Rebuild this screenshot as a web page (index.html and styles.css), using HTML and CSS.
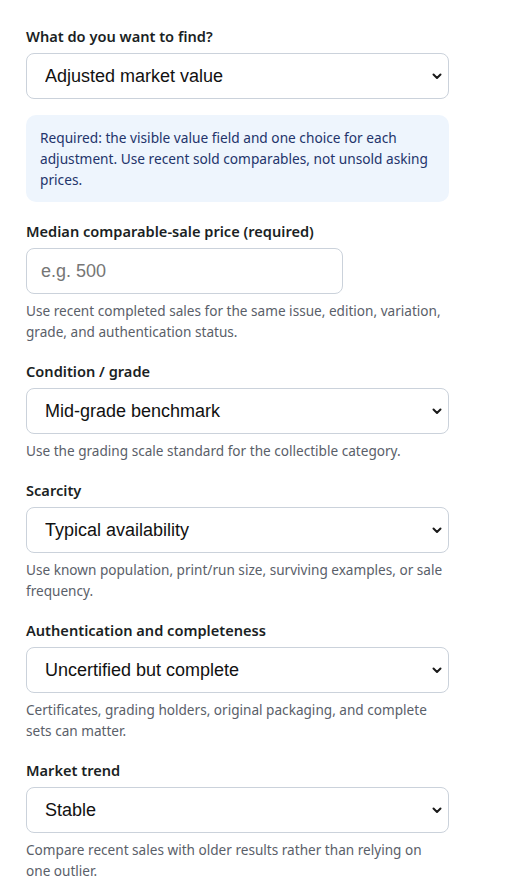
FILE: index.html
```html
<!DOCTYPE html>
<html lang="en">
<head>
<meta charset="utf-8">
<title>Adjusted market value</title>
<link rel="stylesheet" href="styles.css">
</head>
<body>
<form class="form">
  <div class="field">
    <label class="label" for="goal">What do you want to find?</label>
    <div class="select-wrap">
      <select id="goal" class="control">
        <option>Adjusted market value</option>
      </select>
      <svg class="chev" width="10" height="7" viewBox="0 0 10 7"><path d="M1.5 1.5 L5 5 L8.5 1.5" fill="none" stroke="#1a1a1a" stroke-width="2" stroke-linecap="round" stroke-linejoin="round"/></svg>
    </div>
    <div class="info">Required: the visible value field and one choice for each adjustment. Use recent sold comparables, not unsold asking prices.</div>
  </div>
  <div class="field">
    <label class="label" for="price">Median comparable-sale price (required)</label>
    <input id="price" class="control input" type="text" placeholder="e.g. 500">
    <p class="help">Use recent completed sales for the same issue, edition, variation, grade, and authentication status.</p>
  </div>
  <div class="field">
    <label class="label" for="grade">Condition / grade</label>
    <div class="select-wrap">
      <select id="grade" class="control">
        <option>Mid-grade benchmark</option>
      </select>
      <svg class="chev" width="10" height="7" viewBox="0 0 10 7"><path d="M1.5 1.5 L5 5 L8.5 1.5" fill="none" stroke="#1a1a1a" stroke-width="2" stroke-linecap="round" stroke-linejoin="round"/></svg>
    </div>
    <p class="help">Use the grading scale standard for the collectible category.</p>
  </div>
  <div class="field">
    <label class="label" for="scarcity">Scarcity</label>
    <div class="select-wrap">
      <select id="scarcity" class="control">
        <option>Typical availability</option>
      </select>
      <svg class="chev" width="10" height="7" viewBox="0 0 10 7"><path d="M1.5 1.5 L5 5 L8.5 1.5" fill="none" stroke="#1a1a1a" stroke-width="2" stroke-linecap="round" stroke-linejoin="round"/></svg>
    </div>
    <p class="help">Use known population, print/run size, surviving examples, or sale frequency.</p>
  </div>
  <div class="field">
    <label class="label" for="auth">Authentication and completeness</label>
    <div class="select-wrap">
      <select id="auth" class="control">
        <option>Uncertified but complete</option>
      </select>
      <svg class="chev" width="10" height="7" viewBox="0 0 10 7"><path d="M1.5 1.5 L5 5 L8.5 1.5" fill="none" stroke="#1a1a1a" stroke-width="2" stroke-linecap="round" stroke-linejoin="round"/></svg>
    </div>
    <p class="help">Certificates, grading holders, original packaging, and complete sets can matter.</p>
  </div>
  <div class="field">
    <label class="label" for="trend">Market trend</label>
    <div class="select-wrap">
      <select id="trend" class="control">
        <option>Stable</option>
      </select>
      <svg class="chev" width="10" height="7" viewBox="0 0 10 7"><path d="M1.5 1.5 L5 5 L8.5 1.5" fill="none" stroke="#1a1a1a" stroke-width="2" stroke-linecap="round" stroke-linejoin="round"/></svg>
    </div>
    <p class="help">Compare recent sales with older results rather than relying on one outlier.</p>
  </div>
</form>
</body>
</html>
```
FILE: styles.css
```css
html, body {
  margin: 0;
  padding: 0;
  background: #ffffff;
}
body {
  font-family: "Noto Sans", "Open Sans", sans-serif;
  color: #1f2328;
}
.form {
  width: 423px;
  padding: 25px 0 0 26px;
}
.field {
  display: flex;
  flex-direction: column;
  margin-bottom: 18px;
}
.label {
  font-size: 14.6px;
  font-weight: 600;
  line-height: 22px;
  color: #1b1f24;
  margin-bottom: 6px;
}
.select-wrap {
  position: relative;
  display: flex;
}
.control {
  box-sizing: border-box;
  width: 100%;
  height: 46px;
  border: 1px solid #cbd2db;
  border-radius: 8px;
  background: #ffffff;
  font-family: "Liberation Sans", Arial, sans-serif;
  font-size: 18px;
  color: #111111;
  padding: 0 30px 0 18px;
  appearance: none;
  -webkit-appearance: none;
  margin: 0;
}
.chev {
  position: absolute;
  right: 7px;
  top: 20px;
  pointer-events: none;
}
.input {
  width: 317px;
  padding-left: 14px;
}
.input::placeholder {
  color: #767676;
}
.info {
  margin-top: 16px;
  background: #eef5fd;
  border-radius: 10px;
  padding: 12px 14px;
  font-size: 13.7px;
  line-height: 21px;
  color: #23346b;
}
.help {
  margin: 6px 0 0 0;
  font-size: 13.6px;
  line-height: 21px;
  color: #5a6069;
}
```
